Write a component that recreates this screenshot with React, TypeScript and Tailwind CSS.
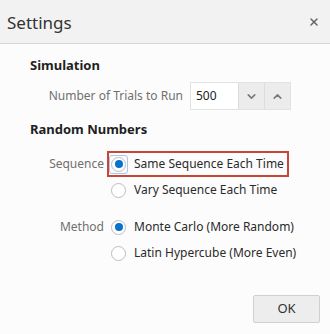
import { ChevronDown, ChevronUp, X } from 'lucide-react';

// Simple radio circle drawn with divs
function Radio({ checked, focused }: { checked?: boolean; focused?: boolean }) {
  return (
    <span
      className={`flex h-[19px] w-[19px] shrink-0 items-center justify-center rounded-[3px] border ${
        focused ? 'border-[#a9c7ec]' : 'border-transparent'
      }`}
    >
      <span className="flex h-[15px] w-[15px] items-center justify-center rounded-full border border-[#bdbdbd] bg-white">
        {checked && <span className="h-[8px] w-[8px] rounded-full bg-[#0572ce]" />}
      </span>
    </span>
  );
}

function Option({ label, checked, focused, boxed }: { label: string; checked?: boolean; focused?: boolean; boxed?: boolean }) {
  return (
    <div
      className={`flex h-[26px] w-[182px] items-center gap-[6px] border-2 ${
        boxed ? 'border-[#c74634]' : 'border-transparent'
      }`}
    >
      <Radio checked={checked} focused={focused} />
      <span className="text-[12px] text-[#2b2b2b] whitespace-nowrap">{label}</span>
    </div>
  );
}

export default function App() {
  return (
    <div
      className="flex h-[334px] w-[330px] flex-col bg-[#fcfcfc]"
      style={{ fontFamily: '"Noto Sans", "Open Sans", sans-serif' }}
    >
      <div className="flex h-[44px] shrink-0 items-center justify-between border-b border-[#d6d6d6] bg-[#f2f2f2] pl-[7px] pr-[10px]">
        <span className="mt-[2px] text-[17px] text-[#333]">Settings</span>
        <X size={12} strokeWidth={3} className="text-[#666]" />
      </div>

      <div className="flex flex-1 flex-col px-[30px]">
        <div className="mt-[11px] h-[20px] text-[13px] font-bold leading-[20px] text-[#1f1f1f]">Simulation</div>

        <div className="mt-[7px] flex h-[28px] items-center">
          <span className="w-[153px] text-right text-[12px] text-[#707070]">Number of Trials to Run</span>
          <div className="ml-[7px] flex h-[28px] border border-[#e2e2e2]">
            <span className="flex w-[47px] items-center bg-white pl-[5px] text-[12px] text-[#222]">500</span>
            <span className="flex w-[26px] items-center justify-center border-l border-[#dcdcdc] bg-[#ececec]">
              <ChevronDown size={13} strokeWidth={3} className="text-[#7a7a7a]" />
            </span>
            <span className="flex w-[26px] items-center justify-center border-l border-[#dcdcdc] bg-[#ececec]">
              <ChevronUp size={13} strokeWidth={3} className="text-[#7a7a7a]" />
            </span>
          </div>
        </div>

        <div className="mt-[9px] h-[20px] text-[13px] font-bold leading-[20px] text-[#1f1f1f]">Random Numbers</div>

        <div className="mt-[12px] flex">
          <span className="w-[75px] pr-[1px] pt-[4px] text-right text-[12px] text-[#707070]">Sequence</span>
          <div className="ml-[2px] flex flex-col">
            <Option label="Same Sequence Each Time" checked focused boxed />
            <Option label="Vary Sequence Each Time" />
          </div>
        </div>

        <div className="mt-[11px] flex">
          <span className="w-[75px] pr-[1px] pt-[4px] text-right text-[12px] text-[#707070]">Method</span>
          <div className="ml-[2px] flex flex-col">
            <Option label="Monte Carlo (More Random)" checked />
            <Option label="Latin Hypercube (More Even)" />
          </div>
        </div>

        <div className="mt-auto mb-[11px] flex justify-end">
          <button className="-mr-[20px] h-[28px] w-[67px] rounded-[2px] border border-[#d0d0d0] bg-[#ededed] text-[13px] text-[#333]">
            OK
          </button>
        </div>
      </div>
    </div>
  );
}
